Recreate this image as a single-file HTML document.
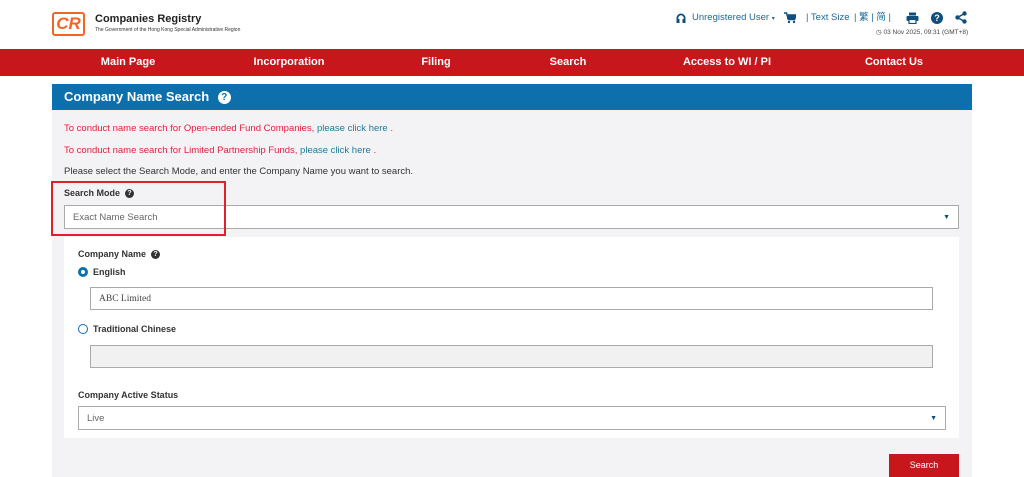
<!DOCTYPE html>
<html><head><meta charset="utf-8"><style>
*{box-sizing:border-box;margin:0;padding:0}
body{width:1024px;height:477px;overflow:hidden;background:#fff;font-family:"Liberation Sans",sans-serif;position:relative;color:#333}
.a{position:absolute}
.nav{left:0;top:49px;width:1024px;height:27px;background:#c8161d}
.nav span{position:absolute;top:7px;color:#fff;font-size:11px;font-weight:bold;transform:translateX(-50%)}
.t{font-size:9.5px}
.inp{border:1px solid #aaa;background:#fff;font-size:9.5px;color:#666;padding-left:8px;line-height:23px}
.lbl{font-size:9px;font-weight:bold;color:#333}
.q{display:inline-block;width:9px;height:9px;border-radius:50%;background:#333;color:#fff;font-size:7px;text-align:center;line-height:9px;margin-left:5px;vertical-align:1px}
.radio{width:10px;height:10px;border:1px solid #0e6fad;border-radius:50%;background:#fff}
.arr{position:absolute;right:8px;top:0;font-size:7px;color:#0e4f7d}
.hd{font-size:9.5px;line-height:12px;color:#1a6a9a;white-space:nowrap;top:12px;font-family:"Liberation Sans","Noto Sans CJK TC",sans-serif}
</style></head><body>
<div class="a" style="left:52px;top:12px;width:33px;height:24px;border:2px solid #f26522;border-radius:3px;color:#f26522;font-weight:bold;font-style:italic;font-size:17px;text-align:center;line-height:20px">CR</div>
<div class="a" style="left:95px;top:13px;font-size:11px;font-weight:bold;color:#222">Companies Registry</div>
<div class="a" style="left:95px;top:27px;font-size:5px;color:#333">The Government of the Hong Kong Special Administrative Region</div>
<svg class="a" style="left:675px;top:12px" width="12" height="12" viewBox="0 0 12 12"><path d="M1.5 11V6a4.5 4.5 0 0 1 9 0v5h-3V7h1.2V6a2.7 2.7 0 0 0-5.4 0v1h1.2v4z" fill="#0e4f7d"/></svg>
<div class="a hd" style="left:692px">Unregistered User <span style="font-size:6px">▾</span></div>
<svg class="a" style="left:784px;top:12px" width="12" height="12" viewBox="0 0 12 12"><path d="M0 1h2.5l2 6.5h6L12 3H4" fill="none" stroke="#0e4f7d" stroke-width="1.6"/><rect x="3" y="3" width="8" height="4" fill="#0e4f7d"/><circle cx="5" cy="10" r="1.2" fill="#0e4f7d"/><circle cx="10" cy="10" r="1.2" fill="#0e4f7d"/></svg>
<div class="a hd" style="left:806px">| Text Size</div>
<div class="a hd" style="left:854px">| 繁 | 简 |</div>
<svg class="a" style="left:906px;top:12px" width="13" height="12" viewBox="0 0 13 12"><rect x="3" y="0.5" width="7" height="3" fill="#0e4f7d"/><rect x="0.5" y="4" width="12" height="5" rx="1" fill="#0e4f7d"/><rect x="3" y="7.5" width="7" height="4" fill="#fff" stroke="#0e4f7d" stroke-width="1.2"/></svg>
<div class="a" style="left:931px;top:12px;width:12px;height:12px;border-radius:50%;background:#0e4f7d;color:#fff;font-size:9px;font-weight:bold;text-align:center;line-height:12px">?</div>
<svg class="a" style="left:955px;top:11px" width="12" height="13" viewBox="0 0 12 13"><path d="M9.5 2.5L2.5 6.5l7 4" stroke="#0e4f7d" stroke-width="1.5" fill="none"/><circle cx="9.5" cy="2.5" r="2.2" fill="#0e4f7d"/><circle cx="2.5" cy="6.5" r="2.2" fill="#0e4f7d"/><circle cx="9.5" cy="10.5" r="2.2" fill="#0e4f7d"/></svg>
<div class="a" style="left:876px;top:28px;font-size:6.5px;color:#444">◷ 03 Nov 2025, 09:31 (GMT+8)</div>
<div class="a nav"><span style="left:128px">Main Page</span><span style="left:289px">Incorporation</span><span style="left:436px">Filing</span><span style="left:568px">Search</span><span style="left:727px">Access to WI / PI</span><span style="left:894px">Contact Us</span></div>
<div class="a" style="left:52px;top:84px;width:920px;height:26px;background:#0e6fad;color:#fff;font-weight:bold;font-size:13px;padding:5px 12px">Company Name Search <span class="q" style="background:#fff;color:#0e6fad;width:13px;height:13px;line-height:13px;font-size:10px">?</span></div>
<div class="a" style="left:52px;top:110px;width:920px;height:367px;background:#f3f3f6"></div>
<div class="a t" style="left:64px;top:123px;color:#e0203a">To conduct name search for Open-ended Fund Companies, <span style="color:#1f7a99">please click here</span> .</div>
<div class="a t" style="left:64px;top:145px;color:#e0203a">To conduct name search for Limited Partnership Funds, <span style="color:#1f7a99">please click here</span> .</div>
<div class="a t" style="left:64px;top:166px;color:#333">Please select the Search Mode, and enter the Company Name you want to search.</div>
<div class="a lbl" style="left:64px;top:188px">Search Mode<span class="q">?</span></div>
<div class="a inp" style="left:64px;top:205px;width:895px;height:24px">Exact Name Search<span class="arr">▼</span></div>
<div class="a" style="left:51px;top:181px;width:175px;height:55px;border:2px solid #e0202a"></div>
<div class="a" style="left:64px;top:237px;width:895px;height:201px;background:#fff"></div>
<div class="a lbl" style="left:78px;top:249px">Company Name<span class="q">?</span></div>
<div class="a radio" style="left:78px;top:267px;border:3px solid #0e6fad;"></div>
<div class="a lbl" style="left:93px;top:267px">English</div>
<div class="a inp" style="left:90px;top:287px;width:843px;height:23px;font-family:'Liberation Serif',serif;color:#444">ABC Limited</div>
<div class="a radio" style="left:78px;top:324px"></div>
<div class="a lbl" style="left:93px;top:324px">Traditional Chinese</div>
<div class="a inp" style="left:90px;top:345px;width:843px;height:23px;background:#f1f1f1"></div>
<div class="a lbl" style="left:78px;top:390px">Company Active Status</div>
<div class="a inp" style="left:78px;top:406px;width:868px;height:24px">Live<span class="arr">▼</span></div>
<div class="a" style="left:889px;top:454px;width:70px;height:23px;background:#c8161d;color:#fff;font-size:9px;text-align:center;line-height:23px">Search</div>
</body></html>
